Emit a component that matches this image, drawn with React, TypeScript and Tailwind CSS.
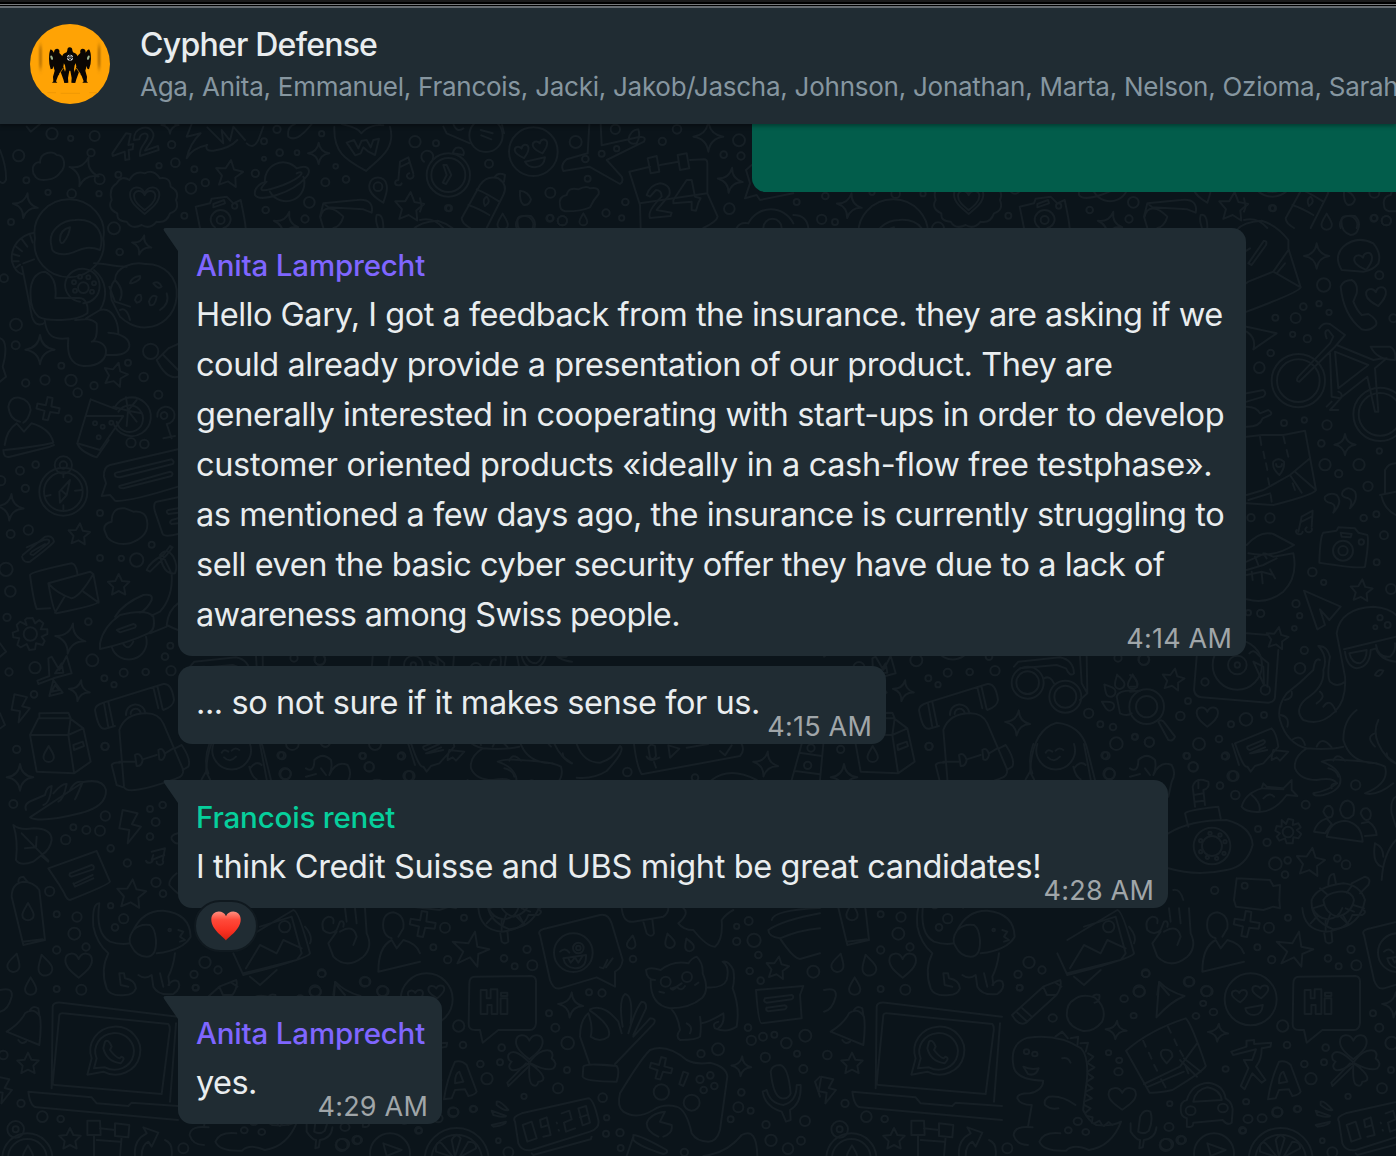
import React from "react";

type Dot = [number, number, number];

/* ---------- wallpaper primitives ---------- */

function Dots({ d }: { d: Dot[] }) {
  return (
    <>
      {d.map(([x, y, r], i) => (
        <circle key={i} cx={x} cy={y} r={r} />
      ))}
    </>
  );
}

const SHAPES = {
  spark: "M0-1Q.12-.12 1 0Q.12.12 0 1Q-.12.12-1 0Q-.12-.12 0-1Z",
  star: "M0-1L.3-.38L.95-.31L.47.16L.59.81L0 .5L-.59.81L-.47.16L-.95-.31L-.3-.38Z",
  heart: "M0 .95C-.5.55-1 .15-1-.35C-1-.95-.25-1.05 0-.45C.25-1.05 1-.95 1-.35C1 .15.5.55 0 .95Z",
  drop: "M0-1C.25-.5.65-.05.65.4A.65.6 0 0 1-.65.4C-.65-.05-.25-.5 0-1Z",
  cross: "M-.25-1L.2-1L.25-.25L1-.25L1 .2L.25.25L.2 1L-.25 1L-.25.25L-1 .2L-1-.25L-.25-.25Z",
  bolt: "M-.4-1L.5-.8L.15-.15L.7 0L-.1 1L0 .2L-.6.1Z",
};

type Mark = [keyof typeof SHAPES, number, number, number, number?];

function Marks({ m }: { m: Mark[] }) {
  return (
    <>
      {m.map(([k, x, y, s, r], i) => (
        <path key={i} d={SHAPES[k]} transform={`translate(${x} ${y}) rotate(${r ?? 0}) scale(${s})`} />
      ))}
    </>
  );
}

function Lines({ p }: { p: string[] }) {
  return (
    <>
      {p.map((d, i) => (
        <path key={i} d={d} />
      ))}
    </>
  );
}

const T = 1 / 3;

/* One repeat of the doodle wallpaper, 824px wide */
function Doodles() {
  return (
    <>
      {/* astronaut, planet, badge, drink */}
      <g transform={`translate(0 120) scale(${T})`}>
        <Dots
          d={[
            [156, 41, 17], [212, 55, 8], [284, 48, 15], [273, 98, 11], [56, 107, 17], [515, 74, 11], [526, 128, 13], [477, 137, 8],
            [583, 148, 9], [355, 164, 9], [299, 178, 15], [79, 181, 9], [144, 217, 8], [215, 221, 13], [297, 221, 8], [33, 306, 9],
            [342, 325, 18], [616, 188, 11], [573, 205, 16], [766, 160, 11], [792, 64, 9], [831, 28, 11], [839, 98, 10], [792, 116, 6],
            [891, 98, 7], [965, 41, 8], [1007, 139, 7], [976, 187, 12], [1038, 178, 10], [928, 247, 16], [797, 270, 10], [915, 297, 11],
            [553, 287, 9], [359, 396, 10], [12, 475, 12], [48, 614, 18], [47, 676, 12], [184, 737, 9], [135, 780, 14], [77, 789, 11],
            [213, 781, 17], [282, 797, 11], [233, 818, 13], [384, 728, 9], [431, 771, 13], [452, 694, 23], [475, 824, 12], [205, 896, 10],
            [393, 968, 14], [433, 972, 13], [1134, 200, 13], [1245, 65, 17],
          ]}
        />
        <Marks
          m={[
            ["spark", 76, 257, 38, 10], ["spark", 252, 155, 46, 18], ["spark", 956, 100, 32], ["spark", 425, 375, 30, 15], ["spark", 120, 689, 44],
            ["spark", 858, 312, 38, 15], ["star", 687, 163, 43, 8], ["star", 346, 765, 38, 15], ["cross", 144, 866, 34, 12],
            ["heart", 434, 240, 44], ["heart", 434, 240, 32], ["star", 1228, 262, 46, 5], ["spark", 510, 15, 26],
          ]}
        />
        <Lines
          p={[
            "M100 160C92 130 115 125 120 128C120 95 160 92 170 105C195 105 200 140 180 158C165 182 120 185 108 172Z",
            "M337 100L378 40L392 42L385 75L400 72L398 88L386 90L388 118L376 120L374 95L338 108ZM402 60C400 20 450 10 460 40C465 60 440 78 435 92L474 78L476 90L420 108C415 80 440 70 443 50C445 35 420 38 418 58Z",
            "M350 190Q365 165 388 180Q405 150 434 160Q460 145 480 175Q510 170 512 200Q540 215 528 240Q540 270 510 280Q500 310 470 305Q450 330 425 315Q395 330 380 305Q350 305 352 280Q320 265 335 240Q325 205 350 190Z",
            "M795 190A55 55 0 0 1 890 145M910 170A55 55 0 0 1 810 215M765 225C760 200 790 185 800 185C770 215 780 220 850 195C920 165 910 150 890 160M890 145C930 130 935 155 915 175C880 215 780 250 765 225",
            "M587 260L630 250L635 236L680 230L700 250L722 240Q735 300 737 324M587 260L600 324M640 252L672 240L675 250L640 262ZM696 258A8 8 0 1 0 712 258A8 8 0 1 0 696 258",
            "M632 300A30 30 0 0 1 692 300A30 30 0 0 1 670 324M645 322A30 30 0 0 1 632 300M650 300A12 12 0 1 0 674 300A12 12 0 1 0 650 300",
            "M105 355A104 100 0 1 1 310 355A104 100 0 1 1 105 355M155 380C140 330 190 300 225 300C290 295 315 340 300 390C250 370 230 400 200 402C170 405 155 395 155 380ZM180 362Q178 330 210 322Q208 345 190 368Q182 372 180 362",
            "M102 338C60 345 30 380 36 425C42 445 52 458 66 462M90 345L98 368M66 358L82 380M46 378L66 394M38 402L58 408M38 424L56 424M46 444L60 434M70 430L102 418M66 440L96 590C105 620 125 615 134 608M92 530C88 480 110 455 135 455C165 470 170 500 166 534L238 534C260 535 265 560 262 580C230 605 140 605 115 590C95 570 92 550 92 530",
            "M195 495A52 52 0 1 1 250 550M195 495A52 52 0 0 0 240 545M234 503A16 16 0 1 0 266 503A16 16 0 1 0 234 503M282 450C320 480 325 530 300 570L258 595M134 600C140 650 160 660 205 655C200 700 210 735 250 738C300 740 320 715 318 690C315 670 290 660 275 665C290 660 292 640 290 610C270 590 240 600 225 600M300 570C340 560 355 610 355 640M325 638C370 640 390 660 388 680C380 710 340 705 318 705M282 430C320 430 340 440 380 440",
            "M345 480C345 440 400 425 435 432C490 430 535 470 530 530C525 590 480 620 440 622C400 625 370 600 360 590L335 540Q325 500 345 480M328 500L345 545L390 560M345 480Q375 510 360 540M390 490Q395 470 420 468Q425 480 395 490ZM460 490Q475 480 485 500Q475 510 460 490M405 540Q410 520 422 525Q430 545 410 548ZM447 545Q455 520 470 530Q465 560 450 555ZM480 570Q510 550 500 520M360 570Q380 560 390 600",
            "M1003 20C1000 100 1040 120 1098 153C1130 120 1190 90 1170 20M1025 12C1060 20 1080 30 1084 40C1100 20 1130 12 1150 16M1040 68L1062 60L1075 85L1085 62L1100 60L1112 82L1120 60L1137 56L1125 105L1105 95L1090 82L1082 100L1066 106Z",
            "M1150 248C1120 230 1105 215 1108 195C1112 165 1155 165 1160 195C1164 215 1155 230 1150 248M1195 180L1200 125L1225 112L1240 160M1205 190A10 8 0 1 1 1195 180M1240 165A10 8 0 1 1 1228 160M1203 140L1228 128",
            "M970 250L1070 240C1110 235 1120 255 1115 278L1090 268L985 262ZM962 290C970 255 1000 260 1030 290C1025 310 1010 324 1000 324M970 250L960 290L970 324M1130 285Q1150 280 1150 324M1130 285Q1125 300 1134 324",
            "M560 50L575 12M560 50L602 40Q570 70 560 115Q575 85 622 75M622 22L670 70L665 30L690 62L700 20L735 60M620 75Q615 95 640 92Q690 85 712 60M740 70Q760 90 775 60L790 20M865 50Q860 20 885 12M865 50Q890 70 935 12",
            "M0 90Q20 140 18 180Q10 195 0 185M0 655C20 660 20 700 8 740L18 770L0 785M80 20L92 35L120 12",
            "M25 860Q30 830 58 833Q90 840 92 870Q85 900 70 908M25 860Q30 900 60 905M14 975Q20 930 50 910L72 935L94 910Q150 925 160 968Q110 980 14 990M272 838L350 868M272 838L232 970L300 990L370 888L258 888M345 860A58 58 0 1 1 340 910M355 875A40 40 0 1 1 350 905M340 860L384 872L410 840M384 872L425 880M384 872L410 905M384 872L380 918M384 872L378 832",
            "M472 890A26 26 0 1 1 500 912L515 955M490 955L525 948M482 888A10 10 0 1 0 502 885A10 10 0 1 0 482 888M505 685L534 672M470 720Q500 780 534 770M505 685L470 720M490 705L534 750",
          ]}
        />
        <Dots d={[[285, 910, 6], [308, 920, 6], [334, 908, 6], [296, 952, 6], [222, 487, 6], [240, 470, 6], [265, 472, 6], [282, 490, 6], [225, 512, 6], [276, 515, 6]]} />
      </g>

      {/* plane, calendar, bottle */}
      <g transform={`translate(420 120) scale(${T})`}>
        <Dots
          d={[
            [48, 70, 9], [207, 131, 12], [467, 66, 18], [586, 28, 14], [545, 101, 9], [590, 86, 8], [496, 117, 10], [503, 176, 9], [727, 64, 11],
            [771, 28, 13], [957, 61, 18], [911, 104, 10], [963, 108, 11], [391, 218, 15], [616, 246, 10], [558, 279, 11], [605, 294, 8],
            [427, 302, 14], [389, 295, 10], [84, 264, 9], [928, 266, 16], [1130, 246, 9], [1216, 228, 10], [1205, 298, 14], [340, 95, 73],
            [85, 165, 65], [85, 165, 51], [198, 46, 50],
          ]}
        />
        <Marks
          m={[
            ["spark", 865, 50, 45], ["spark", 931, 181, 38, 8], ["drop", 490, 298, 18], ["heart", 307, 95, 21, -15], ["heart", 362, 80, 22, -15], ["drop", 248, 305, 24],
          ]}
        />
        <Lines
          p={[
            "M315 125L375 112Q372 140 345 142Q325 142 315 125M300 212Q325 215 333 238Q328 258 310 254Q298 245 300 212",
            "M12 125A18 18 0 1 1 38 118M98 100Q105 75 125 85Q135 95 130 105L98 100M70 135L80 135L94 165L78 192L68 188L80 165Z",
            "M70 20L80 40L150 70M100 12Q110 40 130 25M182 30L218 40M184 46L214 58M246 15L252 40",
            "M508 12L503 100L440 118Q420 135 430 153L508 140L600 192Q612 185 605 170L560 120L672 65Q680 50 660 50L545 76L542 12M625 60Q630 30 655 28Q662 50 650 70Q630 75 625 60",
            "M180 195Q200 165 235 175Q265 195 250 225L200 324M180 195L125 295Q125 310 150 324M170 208Q200 220 238 245M145 255Q175 265 208 285M195 258Q185 240 200 230Q215 245 195 258M225 170Q235 155 255 165L252 185",
            "M420 255Q415 230 440 225Q445 200 475 208Q500 195 510 205Q540 200 536 222Q520 240 510 262Q480 275 435 274Q420 270 420 255",
            "M628 155L690 140M720 135L775 125M810 120L852 118Q862 118 862 130L862 220L893 290Q890 305 850 324M628 155L660 255L662 324M660 250L862 220M683 115L710 108L718 155L692 160ZM773 105L800 100L808 145L780 150Z",
            "M680 225Q690 195 720 190Q755 195 748 225L710 270L755 278L752 288L690 294Q680 275 725 230Q725 210 708 210L690 230ZM760 240L800 180L815 180L825 230L842 235L835 248L828 272L815 270L815 245L760 250Z",
            "M290 324A26 26 0 1 1 338 324M0 300Q40 290 70 324M0 235L5 260L0 275",
            "M995 135L978 150L990 190L975 235L1010 225L1020 240L1120 220M985 310A75 75 0 0 1 1120 310M1120 285Q1160 285 1165 324M950 324Q960 305 985 310M1030 324A25 25 0 0 1 1085 324",
          ]}
        />
      </g>

      {/* compass, mail, gear, moped, milk */}
      <g transform={`translate(0 440) scale(${T})`}>
        <Dots
          d={[
            [60, 92, 12], [107, 74, 10], [76, 145, 11], [300, 219, 9], [32, 282, 12], [85, 270, 14], [455, 314, 9], [300, 354, 9], [364, 355, 8],
            [410, 360, 20], [18, 388, 20], [31, 454, 16], [21, 532, 11], [265, 545, 10], [277, 661, 18], [105, 683, 17], [27, 696, 11],
            [371, 698, 12], [437, 696, 10], [313, 715, 9], [342, 734, 8], [513, 692, 14], [495, 650, 10], [511, 617, 9], [102, 763, 10],
            [50, 928, 11], [315, 919, 11], [190, 155, 72], [190, 155, 58], [190, 75, 26], [190, 75, 11], [91, 582, 20], [2, 122, 14],
          ]}
        />
        <Marks
          m={[
            ["spark", 31, 202, 40, 5], ["star", 237, 284, 34, 5], ["star", 356, 436, 34], ["spark", 211, 596, 46, 10], ["spark", 238, 752, 32, 10],
            ["spark", 60, 1012, 40], ["drop", 146, 942, 24], ["bolt", 60, 805, 42],
          ]}
        />
        <Lines
          p={[
            "M210 120L200 165L180 188L178 155ZM183 150L200 165M190 100L190 112M245 150L225 152M152 165L138 168M190 210L190 196",
            "M10 30Q10 55 30 50L150 20L162 15M232 10Q240 35 290 52L326 0",
            "M534 28L330 75Q310 80 312 110L318 130L305 168L330 165L345 182Q380 188 534 140M345 105Q340 98 360 95L515 58Q525 65 518 72L360 112Q345 112 345 105M358 138L510 95Q522 98 515 108L370 145Q355 145 358 138",
            "M313 270Q310 250 335 245Q335 200 375 205Q390 210 400 215Q440 210 442 250Q445 290 390 310Q345 318 322 292ZM534 172L470 185Q458 190 465 215L488 282Q495 292 534 282M534 205L505 210Q495 215 505 222L534 218M534 235L515 240Q505 248 515 252L534 250",
            "M68 345L135 290Q160 285 162 305Q150 320 90 365Q70 370 66 350M80 322L130 300Q155 295 145 310L100 345Q85 345 95 335L135 312",
            "M150 505L110 507Q100 480 90 405Q95 395 215 370Q228 372 232 400M145 430L270 395L280 402L296 485Q295 495 170 520Q160 515 145 430M145 430Q170 460 215 475Q240 470 280 402M165 518L195 468M296 488L250 455",
            "M75 540L80 555L60 545L50 555L55 572L38 578L40 592L58 595L52 615L62 622L80 612L88 630L105 628L108 610L128 615L134 603L125 590L142 582L142 568L122 568L130 550L118 540L105 550L98 534L80 535Z",
            "M440 390Q450 365 490 345L510 318L518 322L500 345L450 395ZM480 345Q500 320 520 350Q535 380 525 400Q490 405 480 345M490 350L512 395M515 400Q520 470 480 515L455 527M345 530Q370 490 430 465Q460 460 455 480Q440 510 420 518M300 610Q310 560 360 525Q440 505 460 530Q468 570 445 580Q380 610 300 627ZM350 570L400 552Q412 555 405 563L360 577ZM335 620A52 52 0 0 0 438 590M370 612Q385 635 400 605M534 490Q505 510 500 555Q520 565 534 570M450 580L500 560",
            "M145 655L155 650L178 690L200 648L215 700L160 715L115 732L112 722L148 708ZM165 700L185 670L190 698ZM148 768L160 720L188 758ZM155 755L165 735L178 750Z",
            "M90 885L115 835L210 835L250 865L272 965L222 1000L110 995ZM118 835L118 820L205 818L212 835M90 885L205 885L250 865M205 885L222 998M205 885L212 835M220 915L248 905L252 918L222 930Z",
            "M285 810Q285 795 310 788L490 732Q515 728 522 780Q520 800 490 810M285 810Q295 870 315 866L345 858M312 790L325 862M325 786L340 858M460 742L475 805M472 738L488 808M378 825A28 28 0 1 1 436 820M392 822A15 15 0 1 1 422 820",
            "M358 870Q375 820 440 820Q475 820 490 850L550 990Q550 1010 530 1015Q380 1070 372 1040ZM358 965L405 965M428 958L470 945M495 940L520 925M405 945Q420 935 428 960Q425 980 410 978ZM475 930Q490 920 495 945Q490 965 478 958ZM335 975Q340 965 360 968M335 975L350 1035L370 1042M525 925L545 915Q575 960 565 980L548 990M0 610L18 635L0 650M0 820L15 855L0 865",
          ]}
        />
      </g>

      {/* bread, leaf, dog, laptop */}
      <g transform={`translate(0 740) scale(${T})`}>
        <Dots
          d={[
            [40, 192, 12], [316, 228, 14], [220, 262, 9], [259, 270, 12], [300, 272, 15], [197, 299, 14], [332, 325, 10], [382, 369, 11], [467, 246, 12],
            [450, 290, 10], [488, 195, 10], [450, 207, 9], [149, 454, 14], [170, 523, 9], [231, 531, 14], [223, 581, 18], [258, 621, 11],
            [170, 630, 11], [170, 747, 9], [244, 749, 15], [468, 427, 14], [489, 461, 10], [332, 497, 8], [371, 536, 14], [345, 562, 10],
            [615, 667, 17], [582, 703, 11], [654, 690, 11], [587, 743, 9], [10, 945, 13], [63, 1090, 11], [127, 1130, 16], [182, 1137, 10],
            [550, 1225, 15], [842, 46, 10], [855, 101, 17], [1107, 80, 14], [1087, 47, 9], [1202, 49, 9], [1225, 108, 15], [315, 19, 11],
            [965, 700, 12], [1094, 725, 15], [945, 753, 17], [1147, 753, 16], [1070, 1200, 13], [1025, 1215, 18],
            [509, 570, 4], [47, 1168, 25], [47, 1168, 9], [1170, 1240, 60], [82, 1255, 75], [82, 1255, 58], [854, 560, 17],
          ]}
        />
        <Marks
          m={[
            ["bolt", 388, 260, 50], ["star", 394, 464, 46, 5], ["drop", 84, 515, 26], ["drop", 43, 668, 28, 15], ["drop", 133, 675, 32, -15],
            ["drop", 92, 738, 26], ["heart", 236, 675, 40], ["star", 84, 972, 34], ["star", 210, 1198, 34], ["bolt", 8, 1050, 40], ["drop", 84, 1240, 24],
          ]}
        />
        <Lines
          p={[
            "M78 210Q70 190 100 180L135 165Q140 140 155 138Q150 190 130 195M160 160Q185 130 200 132Q190 180 175 185M210 150Q225 120 248 126Q230 170 225 178M250 126Q310 115 318 150Q320 200 240 220Q120 250 90 232Z",
            "M40 255Q60 272 100 265Q155 265 155 300Q150 330 125 345L100 365Q60 380 48 360Q55 300 40 255M65 280L145 362M110 290L108 320M75 325L108 322M125 348L145 365",
            "M145 385L290 333L330 425Q325 435 210 480Q200 480 192 458L175 430ZM210 400L275 375Q285 378 280 388L215 410Q205 408 210 400M225 430L278 405M220 430L225 440L280 415M455 335L495 325L488 362M460 345L455 360L493 345M438 362A10 8 0 1 0 458 358M470 365A10 8 0 1 0 488 362",
            "M35 470Q35 430 70 425Q100 425 118 450L135 600L70 615ZM55 425Q55 410 70 410L82 425M68 605L128 598M530 400Q505 420 508 435Q520 450 534 460M534 280Q510 285 515 298Q525 312 534 310",
            "M298 490Q275 490 280 560Q290 610 325 640Q300 690 320 745Q330 770 375 765Q400 765 408 745Q405 720 375 715L372 700L358 700L362 735L385 740M298 490Q285 580 330 605Q360 615 390 610M450 555Q420 550 400 570Q380 600 395 620Q410 650 440 650Q470 650 468 600Q465 565 450 555M400 570Q430 510 490 512Q570 520 572 590Q550 630 470 640M415 705Q435 720 455 705L460 740Q475 768 520 762Q545 745 535 725Q520 715 505 735M480 700L490 740M525 640Q520 680 505 710L508 735M535 570L550 575L540 590L555 600L540 605",
            "M155 1045L158 800Q160 785 185 788L534 830M158 1030L178 825Q180 818 190 820L505 852Q512 860 508 880L485 1062L165 1035Q158 1035 158 1030M85 1055Q90 1100 110 1102L534 1140M85 1055L275 1072L290 1090L385 1098L395 1088L534 1098M510 1085L528 850",
            "M262 1004L275 955A75 72 0 1 1 310 995ZM282 985L290 955A58 55 0 1 1 315 982ZM315 905Q325 895 335 920L330 930Q345 950 358 955L365 950Q378 955 362 970Q320 965 310 925Z",
            "M20 875Q60 850 75 820Q100 800 120 830Q125 860 118 915L20 875M90 810Q100 795 115 805L118 825M55 900Q65 915 78 905M0 750Q40 740 35 770Q25 810 0 815",
            "M262 1142L300 1142L302 1185L262 1185ZM345 1150L388 1155L385 1192L345 1188ZM300 1165L345 1170M282 1185L282 1248M365 1190L360 1248M290 1200L360 1205M405 1248Q400 1200 440 1180L430 1162L475 1178L455 1220L445 1205Q425 1215 425 1248M495 1200Q520 1210 515 1248",
            "M1150 1210L1205 1230L1160 1248Z",
            "M730 600L880 510Q895 510 930 640Q925 655 730 705L700 640M730 700L890 660L905 640L875 530L780 560M738 685L780 615L830 640L850 600L905 625M750 710L780 735L830 690M915 560Q940 590 930 610",
            "M970 570Q960 540 985 530Q1005 530 1000 550M970 570Q990 590 1010 570L1020 545Q1035 540 1030 560M1010 575L985 610L1000 650Q1040 690 1090 650Q1120 620 1100 580L1095 505M1040 545L1035 505M1070 550L1065 505M1020 575Q1060 550 1070 590L1060 615M1150 565Q1145 520 1180 517Q1215 525 1210 565L1195 590M1150 565Q1155 590 1175 595M1135 695Q1135 620 1175 600L1190 625L1210 600Q1250 610 1260 640M1135 695L1260 665M1000 765L1005 730L1035 765",
            "M628 12Q610 60 625 100M640 12A58 58 0 1 0 750 12M665 38Q672 25 685 35M695 32Q705 20 718 30M672 52Q690 70 708 50M780 12L800 118M750 85Q770 60 785 75M605 118L618 95L630 118M748 80Q755 110 770 118M1225 12L1245 75",
          ]}
        />
      </g>

      {/* speech, cat, controller, clover, clock */}
      <g transform={`translate(400 880) scale(${T})`}>
        <Dots
          d={[
            [135, 143, 15], [192, 113, 9], [100, 202, 9], [143, 239, 11], [312, 235, 10], [344, 259, 9], [381, 208, 11], [397, 256, 15], [567, 337, 9],
            [606, 339, 11], [699, 237, 10], [447, 400, 9], [466, 443, 12], [176, 438, 17], [189, 495, 10], [305, 503, 10],
            [300, 547, 9], [241, 552, 10], [261, 596, 17], [159, 697, 15], [219, 687, 10], [55, 751, 10], [372, 649, 8], [474, 625, 15],
            [503, 489, 19], [501, 570, 9], [608, 653, 13], [620, 713, 8], [618, 761, 9], [660, 758, 11], [295, 782, 7], [662, 804, 9],
            [325, 817, 15], [1046, 123, 12], [1010, 139, 8], [1010, 184, 11], [1062, 181, 20], [1075, 225, 10], [1049, 273, 10], [1082, 302, 10],
            [1240, 275, 18], [1044, 443, 10], [1054, 481, 14], [1089, 470, 12], [1123, 464, 9], [1159, 489, 16], [1216, 467, 18], [1191, 521, 9],
            [1096, 532, 14], [1210, 567, 12], [954, 508, 18], [903, 521, 11], [1024, 637, 10], [1015, 682, 15], [1052, 692, 9], [992, 718, 9],
            [1098, 734, 11], [1215, 723, 15], [1113, 781, 17], [1164, 806, 16], [1203, 782, 12], [853, 817, 11], [784, 636, 23], [875, 668, 24],
            [900, 598, 11], [931, 586, 10], [911, 630, 10], [943, 618, 10], [80, 358, 78], [520, 218, 58], [535, 204, 16], [535, 204, 7],
            [170, 840, 96], [170, 840, 76], [797, 305, 15], [861, 291, 15],
          ]}
        />
        <Marks
          m={[
            ["cross", 68, 132, 38, 10], ["spark", 512, 375, 38, 5], ["star", 1132, 265, 36, 8], ["spark", 1024, 559, 30, 5], ["drop", 695, 186, 20, 10],
            ["drop", 808, 182, 22, -15], ["drop", 866, 194, 20, -20], ["cross", 783, 565, 33, 15], ["heart", 388, 500, 40],
          ]}
        />
        <Lines
          p={[
            "M225 155L232 200L268 208L235 222L232 260L210 232L172 250L190 215L158 185L205 190Z",
            "M235 84Q240 150 305 155Q370 150 385 105L415 105Q430 95 418 90M265 84Q280 115 310 118Q345 115 355 84M300 155L305 185Q315 195 325 185L322 152M260 130L280 108M305 118L305 150M345 105L370 130M365 85L390 95",
            "M420 165Q410 150 440 145L600 105Q625 100 635 130L668 240Q665 265 645 275L645 320L590 292L480 325Q460 330 450 300ZM480 215Q495 200 508 218M490 235L558 225Q560 265 525 265Q495 262 490 235M505 235L512 248L525 232L535 248L548 228M600 262L610 265L622 240M618 262L638 235",
            "M208 310Q208 290 225 290L395 288Q410 290 408 310V430Q405 450 390 450H295L248 488L240 450H225Q205 450 206 430ZM242 330H260V355H272V328H292V402H275V375H262V402H242ZM302 355H322V402H302ZM303 338H322V348H303Z",
            "M386 545Q340 500 325 525Q322 540 335 545Q320 560 335 570Q350 575 386 550M390 545Q420 505 450 512Q462 520 455 535Q475 550 460 565Q440 575 392 550M388 555Q385 610 398 615Q412 622 415 605Q432 605 430 592Q425 575 392 552",
            "M385 560L325 618L322 608L378 550M132 658Q140 600 165 545Q185 540 200 555L230 635Q225 645 205 648L195 628L165 630L155 655ZM165 610Q165 580 178 575L190 605Z",
            "M565 400Q540 420 540 470L568 550M565 400Q580 440 572 470Q600 490 625 470Q640 440 570 392M570 388Q610 370 655 425L665 460M668 440Q655 360 675 342Q700 345 692 430M685 460Q705 390 725 365Q740 365 738 385L700 465M700 470L750 415Q770 415 762 430L645 552M550 560Q555 548 650 558Q660 570 650 605Q555 605 548 590Z",
            "M765 300Q740 300 738 270Q750 260 782 270Q820 240 865 250Q875 235 890 230Q910 250 908 280Q930 330 905 355Q870 385 810 385Q750 375 752 300M815 325L830 320L845 310M830 320Q820 335 812 325M832 322Q845 335 855 318M778 335L792 338M885 315L895 308M920 322Q970 325 980 300Q990 260 968 245Q985 240 1000 270Q1005 300 998 325Q1020 380 1010 440Q980 460 945 445Q935 430 955 425M815 388Q835 410 840 450Q825 470 840 480Q890 480 900 470Q905 440 900 410M860 430Q880 440 870 460M905 430Q930 425 970 400Q975 430 955 445",
            "M660 640Q720 540 750 510Q800 490 860 540Q890 555 930 548Q980 560 982 590L960 750Q950 785 925 785Q890 785 875 760Q860 690 830 680Q790 670 760 690Q710 720 670 695Q650 680 660 640M850 575L865 580L850 618L838 612Z",
            "M740 730Q750 700 795 695L780 725L815 735Q820 760 790 770M740 730Q740 755 775 770M700 765Q720 765 800 810Q805 820 790 822Q720 800 700 780ZM700 770L680 828M910 828Q980 820 1025 765Q1070 740 1072 828",
            "M345 725Q335 710 365 700L565 655Q580 655 595 720Q600 745 570 755L395 810Q365 815 355 790ZM395 820L400 825L572 778L575 770M368 735L395 725L410 775L382 785ZM445 735L424 742L420 720L440 712L452 765L430 770M485 700L508 692L515 718L492 728L498 755L525 745M535 685L558 678L570 728L548 736ZM540 712L564 704M470 728L471 730M476 750L477 752",
            "M290 665Q300 660 325 690Q315 695 290 675ZM275 692L318 708Q315 715 280 705ZM275 735L318 725Q318 735 280 740ZM165 830L155 780Q168 755 182 775ZM160 832L125 790Q105 780 108 815ZM178 832L205 785Q230 785 228 805Z",
            "M665 84Q670 130 700 125L790 110Q805 100 805 84M730 125L740 160Q755 175 762 160L757 118M850 84Q870 100 835 130Q850 150 880 150Q920 200 945 200Q970 180 965 120Q980 100 1000 90M1260 84Q1120 90 1115 120M1260 100Q1150 120 1105 150Q1105 170 1140 175Q1180 235 1200 237L1260 220M1140 175Q1200 150 1260 145",
            "M1068 330L1210 318L1200 345L1205 415L1085 430Q1075 430 1068 330M1095 355L1175 345Q1185 350 1175 358L1100 368Q1088 365 1095 355M1100 383L1155 376Q1165 380 1155 388L1105 394Q1095 390 1100 383",
            "M1112 575Q1115 555 1140 555Q1165 560 1172 640Q1165 658 1145 655Q1120 650 1112 575M1088 635Q1095 680 1145 695L1158 725L1172 720L1170 690Q1205 670 1202 615L1190 615Q1190 665 1150 675Q1110 670 1100 630ZM1260 590L1245 605L1260 650",
          ]}
        />
      </g>

      {/* dinosaur, folded map, car, pencil, letters */}
      <g transform={`translate(-24 880) scale(.38 ${T})`}>
        <Dots
          d={[
            [578, 323, 8], [665, 414, 11], [853, 356, 10], [893, 335, 15], [910, 281, 10], [878, 407, 8], [1025, 305, 13], [1071, 334, 15], [1061, 370, 8],
            [1088, 396, 10], [1042, 408, 9], [812, 518, 7], [840, 541, 8], [838, 575, 11], [1120, 567, 8], [973, 671, 7], [1174, 665, 8], [971, 741, 12],
            [965, 793, 17], [1005, 780, 11], [1166, 752, 8], [1179, 717, 12], [1216, 715, 12], [1257, 696, 13], [1310, 687, 9],
            [596, 515, 7], [618, 522, 7], [706, 751, 9], [752, 756, 9], [731, 724, 11],
          ]}
        />
        <Marks
          m={[
            ["spark", 832, 450, 28, 5], ["spark", 1100, 458, 27, 5], ["heart", 848, 655, 36], ["heart", 1157, 348, 20, -5], ["heart", 1212, 335, 21, -5],
          ]}
        />
        <Lines
          p={[
            "M558 405L640 320L685 300Q690 320 675 345L595 428Q575 440 558 405M640 320L650 345L675 345M572 398L598 425M585 385L610 410M672 308L688 320",
            "M720 360Q740 340 775 352Q810 385 795 425Q775 455 745 453Q705 440 702 405Q702 370 720 360M770 350Q775 340 788 345Q790 365 775 368",
            "M945 305Q970 335 1012 348Q975 365 938 412Z",
            "M562 560Q550 490 600 473Q680 460 740 505Q760 530 755 600L745 690Q760 725 780 735Q820 740 845 725Q820 800 760 810Q720 790 700 812Q640 815 630 785Q640 755 685 760M562 560Q570 600 640 602Q640 630 605 640Q570 640 572 655Q580 675 610 675L600 740M612 742Q565 735 562 765Q570 795 600 795M725 675Q690 645 655 650Q640 660 645 675Q660 690 680 685M588 560Q605 570 628 565Q620 590 600 582ZM690 535Q705 530 712 548",
            "M672 470L690 455L705 475M712 475L732 470L730 495M738 490L758 488L752 515M758 520L772 530L758 545M758 550L775 562L757 575M757 580L772 592L755 605M755 612L770 625L752 635M752 642L768 655L748 665M748 675L765 685L750 700M755 708L770 712L768 728M775 730L788 722L795 735M800 738L812 726L822 735",
            "M858 512Q920 450 1015 415Q1030 430 1068 558Q1060 575 980 630Q940 640 920 638ZM905 612L1000 560L1045 490M912 622L1010 575M1000 540L1045 590M1010 535L1055 575M965 550Q940 520 955 510Q980 505 980 530Z",
            "M903 482L910 500M918 518L925 536M932 555L940 572M950 598L962 622M968 440L976 458M985 478L992 496M1000 512L1008 528M1015 560L1022 580",
            "M1002 690Q1000 665 1018 660Q1030 612 1075 608Q1115 615 1120 655Q1142 670 1138 700L1136 728Q1125 738 1112 720L1035 728Q1035 745 1018 740L1018 715Q1002 710 1002 690M1035 665Q1040 630 1072 622Q1105 628 1110 660ZM1015 692A13 13 0 1 0 1041 692A13 13 0 1 0 1015 692M1100 684A13 13 0 1 0 1126 684A13 13 0 1 0 1100 684",
            "M1135 515L1175 500L1175 482L1195 480L1195 492L1240 488L1238 500L1215 505Q1215 540 1200 560L1225 600L1215 608L1190 580L1170 628L1160 618L1180 565L1168 540L1190 540L1200 508L1140 525Z",
            "M895 710Q905 685 922 695Q930 720 918 752Q905 765 890 755ZM870 730L870 755Q885 780 895 780L893 805L902 802L905 780Q935 775 938 742M1172 385L1218 375Q1215 405 1195 405Q1175 405 1172 385",
          ]}
        />
      </g>

      {/* envelope, bicycle, map, quotes */}
      <g transform={`translate(306 180) scale(${T})`}>
        <Dots
          d={[
            [429, 85, 9], [733, 114, 10], [769, 122, 14], [748, 286, 12], [581, 315, 20], [520, 380, 10], [567, 371, 8], [597, 397, 8], [436, 413, 9],
            [497, 414, 15], [488, 463, 8], [532, 476, 11], [422, 519, 10], [388, 563, 16], [462, 729, 9], [523, 720, 8], [591, 735, 14],
            [574, 790, 10], [585, 854, 17], [687, 854, 17], [626, 881, 11], [748, 813, 8], [714, 919, 14], [420, 1014, 14], [363, 1013, 11],
            [701, 1014, 10], [739, 1003, 9], [505, 602, 80], [505, 602, 64], [750, 703, 80], [750, 703, 64], [790, 415, 12],
          ]}
        />
        <Marks
          m={[["spark", 560, 228, 38], ["spark", 645, 794, 32], ["heart", 740, 350, 30, -10], ["heart", 702, 245, 27, -15]]}
        />
        <Lines
          p={[
            "M320 150Q340 125 395 122Q440 135 475 180L475 205L512 322Q510 335 350 395L300 395M475 210L430 275L355 305L320 330M430 275L512 322M465 250L440 280M355 250L402 182Q412 182 408 195L365 255ZM345 215L360 205",
            "M635 270Q610 230 640 200Q680 165 730 190Q755 220 745 250Q730 270 700 275ZM632 320Q640 300 665 300Q685 310 680 340L670 365Q680 390 695 405L715 402Q745 420 738 435Q720 455 695 448Q640 405 632 320M635 115Q640 105 675 108Q692 125 685 145Q680 165 662 165Q630 155 635 115",
            "M350 440L440 460L370 508Q380 475 350 455M568 445Q580 425 600 432L645 465L615 500L508 605Q495 605 505 590L600 490L610 470L595 450Q580 450 590 475M620 495L730 540Q750 535 770 535L735 565L745 695L735 695L712 590L630 655L605 650L600 520M615 515L715 555L625 625ZM722 500L780 500Q800 510 795 540Q740 540 722 500M625 635Q640 640 632 655L600 690L625 690M590 680L605 665",
            "M350 770L395 765L460 765L525 752L558 930Q550 945 430 975L350 970M350 945L400 930L480 885L540 835M355 960L420 940M480 885L515 938M495 875L558 930M448 885Q425 865 430 845Q445 830 462 845Q465 865 448 885M438 852A9 9 0 1 0 456 852",
            "M390 770L394 795M400 815L404 835M408 850L412 870M414 895L418 915M422 945L425 965M460 768L465 790M470 810L475 830M488 910L495 930",
            "M610 998Q620 975 605 970Q580 965 585 950Q600 935 620 945Q640 965 610 998M660 985Q670 960 655 955Q630 950 638 935Q655 915 675 935Q685 960 660 985M505 1055L515 1010L548 992L545 1040M515 1025L545 1010M500 1050A10 8 0 1 0 518 1055M530 1042A10 8 0 1 0 545 1045M765 940L765 870Q775 850 798 850M750 945L798 935M755 950Q765 990 798 1005",
            "M350 640L400 630Q412 640 400 650L350 665M350 680Q380 680 390 700L415 690Q430 700 420 705L398 715Q390 740 350 740",
          ]}
        />
      </g>

      {/* camera, octopus, turntable, fish, people */}
      <g transform={`translate(306 520) scale(${T})`}>
        <Dots
          d={[
            [762, 46, 12], [740, 127, 9], [547, 156, 13], [581, 187, 8], [498, 251, 11], [509, 287, 8], [493, 325, 7], [392, 280, 11], [355, 278, 8],
            [523, 391, 11], [510, 445, 16], [783, 207, 15], [639, 92, 30], [639, 92, 14], [694, 66, 8], [41, 418, 16], [225, 486, 11], [174, 543, 9],
            [151, 588, 13], [303, 613, 9], [348, 598, 19], [402, 585, 9], [14, 651, 8], [58, 667, 14], [207, 672, 18], [267, 657, 10], [171, 708, 9],
            [190, 741, 14], [287, 708, 11], [311, 768, 15], [270, 797, 10], [316, 825, 13], [527, 854, 12], [677, 795, 14], [384, 927, 9],
            [411, 967, 11], [436, 1031, 19], [473, 1021, 10], [465, 1064, 10], [622, 1015, 10], [648, 1034, 13], [254, 1111, 11], [344, 1097, 9],
            [322, 435, 74], [322, 435, 28], [322, 435, 8], [50, 560, 52], [50, 560, 32], [246, 978, 55], [246, 978, 30], [474, 936, 16],
            [750, 293, 8], [773, 315, 9], [736, 322, 6], [406, 510, 14],
          ]}
        />
        <Marks
          m={[["star", 694, 213, 35, 5], ["star", 129, 480, 35, 10], ["star", 441, 356, 35, 10], ["heart", 232, 590, 32], ["star", 541, 1028, 45, 8]]}
        />
        <Lines
          p={[
            "M580 38L620 32L625 22L675 25L685 38L712 45Q718 60 705 140Q695 148 568 128Q570 50 580 38M632 38L665 42L662 52L635 50Z",
            "M522 212L632 260L598 300L570 268L585 315L562 328ZM350 75Q390 30 430 42L492 75Q430 115 355 100M350 125L405 100L430 110L490 100Q505 170 460 215Q410 255 350 238M350 150L400 135L440 115M350 165L395 155L430 165M375 110L385 135M400 100L410 115M365 155L368 180M395 160L398 190M420 148L435 175",
            "M200 410L192 510Q195 530 215 532L415 548Q435 545 435 530L445 390M350 340L415 345M358 400Q370 385 385 405L415 430L412 500M402 495L400 440L370 425Z",
            "M85 605Q95 595 105 610L135 650Q130 665 115 660ZM0 465Q25 475 22 500L0 500M0 515L30 512",
            "M645 470L620 340Q630 265 730 260Q780 265 798 285M642 388L798 350M645 395Q650 440 680 445Q720 440 722 390L738 385Q750 420 798 425M658 400Q665 430 690 430Q710 420 710 390ZM738 375Q745 415 780 410Q798 395 795 370M735 465Q745 445 760 452Q750 475 735 465",
            "M645 470Q650 540 615 575Q570 620 520 600Q490 570 530 535Q585 500 580 450Q595 410 565 378Q590 375 600 410Q590 470 600 485Q620 505 645 485M570 420Q555 410 550 450Q510 490 470 520Q440 560 450 600Q470 670 530 685Q600 690 640 680M530 685Q490 710 495 745Q510 780 560 780Q610 770 620 790Q600 810 550 820Q550 830 580 825Q640 810 630 770Q620 740 575 725Q600 715 640 720Q740 725 765 740Q780 790 705 820Q740 830 790 790M680 570Q640 600 640 660Q660 730 740 730M745 600Q720 650 770 710L798 730",
            "M465 540Q490 535 485 515M452 585Q480 590 472 620M485 660Q515 640 525 675M560 680Q575 645 605 682M570 515Q590 530 560 550M580 560Q600 530 618 575M610 722Q620 695 645 722M595 745Q620 750 625 770M735 640Q705 650 735 680M770 700Q770 720 798 730M605 805Q600 790 622 790",
            "M315 670L425 625Q440 640 445 680L400 730L375 738L362 755L352 740Q340 745 315 670M352 680L400 660Q410 665 400 672L360 690Q350 688 352 680M360 700L405 682M425 710L430 690L475 695L450 722L440 712L425 720ZM365 700L412 690",
            "M335 860Q345 820 395 805L400 790L410 800L460 805L485 780L485 810L502 828L470 825Q430 880 380 876Q345 875 335 860M365 825Q395 850 388 875M400 835Q420 815 432 830M398 805L460 808",
            "M0 745Q25 760 25 720Q50 695 75 720Q80 745 70 765Q90 720 125 735Q140 760 125 785M0 770L30 762M60 765L45 745M125 785L115 830M195 860L188 800Q195 775 220 780L235 785Q240 805 220 810L225 855M192 825L220 820M195 845L222 842M205 780L205 805M175 920L165 880Q170 870 265 860L272 895M115 940Q180 900 290 900Q365 920 368 975Q350 1040 290 1050Q200 1070 115 1045",
            "M455 900L468 912L475 896L490 900L488 915L505 910L512 922L500 930L514 942L505 955L490 952L488 970L470 970L465 955L448 962L440 950L450 940L436 932L440 918L455 920Z",
            "M590 950Q600 905 645 902Q695 910 698 965ZM630 870Q635 840 655 842Q678 850 670 885Q650 905 635 885ZM580 875Q585 855 600 858Q615 870 605 890Q590 900 580 875M552 935Q560 905 590 895L605 912L585 940ZM692 880Q695 862 712 865Q728 875 720 895Q705 910 692 880M695 910L715 905Q738 920 740 945L705 948",
            "M320 1075L420 1080L430 1098L450 1095L448 1140M320 1075L312 1140M595 1095Q595 1060 612 1062L618 1092M545 1140Q560 1100 640 1090Q690 1095 705 1140M665 1090L705 1070Q725 1075 715 1095L690 1120M130 1110Q150 1105 160 1140M798 830Q780 840 785 880L798 920M755 1080Q760 1000 798 960M735 970Q725 1030 755 1040M735 970Q760 980 760 1010",
            "M312 1140L318 1160L400 1170L430 1160L450 1165L448 1140M545 1140Q540 1200 610 1228Q690 1220 705 1140M580 1140Q585 1180 622 1190Q665 1180 672 1140Q665 1110 625 1115Q590 1120 580 1140M580 1155L548 1165M600 1185L590 1215M640 1188L655 1215M670 1155L702 1165M590 1122L570 1105M650 1118L665 1098",
          ]}
        />
        <Dots d={[[240, 940, 5], [270, 945, 5], [285, 965, 5], [282, 1000, 5], [260, 1015, 5], [232, 1012, 5], [212, 995, 5], [212, 962, 5]]} />
      </g>

      {/* glasses, paw, penguin, magnifier */}
      <g transform={`translate(36 640) scale(${T})`}>
        <Dots
          d={[
            [686, 220, 14], [721, 253, 9], [759, 261, 10], [825, 290, 9], [868, 306, 14], [769, 311, 19], [738, 347, 11], [749, 402, 16], [852, 59, 16],
            [774, 54, 11], [503, 128, 48], [503, 128, 34], [616, 170, 48], [616, 170, 33],
          ]}
        />
        <Marks m={[["spark", 473, 249, 38, 5], ["drop", 747, 150, 22, -40], ["drop", 777, 125, 22, -15], ["drop", 818, 125, 22, 0], ["drop", 743, 195, 20, -60]]} />
        <Lines
          p={[
            "M462 80L475 65L600 52Q640 60 642 100Q630 112 618 85L590 75L480 85M552 115Q570 105 582 130M660 48L665 130L682 160L660 180M680 48L682 160M770 170Q775 150 825 152M770 170L780 220Q800 230 815 220",
            "M510 400Q515 270 590 248Q660 255 680 320L705 420",
          ]}
        />
      </g>

      {/* voice card, lighthouse */}
      <g transform={`translate(420 736) scale(${T})`}>
        <Dots d={[[622, 108, 13], [825, 125, 10], [1163, 88, 11], [1173, 36, 11]]} />
        <Marks m={[["spark", 1037, 84, 38, 10]]} />
        <Lines
          p={[
            "M642 24Q650 90 665 115L960 60Q975 45 965 24M685 35Q690 20 705 30L708 60Q700 75 690 65ZM680 62Q690 80 718 65M702 78L708 95M745 28L778 38L750 65ZM900 45L915 58L935 28M1145 24L1115 132M1210 24L1200 132M1138 50L1205 60M1125 105L1200 115M875 132Q930 90 1010 132M470 24Q490 80 540 80Q580 70 600 30Q620 40 560 105Q520 130 470 125M800 35L865 24",
          ]}
        />
      </g>
    </>
  );
}

function Wallpaper() {
  return (
    <svg
      className="absolute inset-0 h-full w-full fill-none stroke-[#161f25] [&_*]:[vector-effect:non-scaling-stroke]"
      viewBox="0 0 1396 1156"
      strokeWidth={2}
      strokeLinecap="round"
      strokeLinejoin="round"
      aria-hidden="true"
    >
      <Doodles />
      <g transform="translate(824 0)">
        <Doodles />
      </g>
    </svg>
  );
}

/* ---------- header ---------- */

function Avatar() {
  return (
    <svg className="h-20 w-20 shrink-0" viewBox="0 0 240 240" aria-hidden="true">
      <defs>
        <filter id="smudge" x="-200%" y="-50%" width="500%" height="200%">
          <feGaussianBlur stdDeviation="2.5 10" />
        </filter>
      </defs>
      <circle cx="120" cy="120" r="120" fill="#ffa305" />
      <g filter="url(#smudge)" fill="#8a5200">
        <rect x="29" y="66" width="5" height="66" />
        <rect x="205" y="66" width="5" height="66" />
      </g>
      <path d="M52 206H78M92 208H150M178 206H202" stroke="#d98704" strokeWidth="2" opacity=".6" />
      <g fill="#0a0603">
        {/* centre figure */}
        <path d="M119 70Q127 70 127 79L129 85Q140 88 143 98L141 112L134 124L132 136L136 152L131 162L133 172L136 176H124L125 162L121 140L118 140L114 162L115 176H102L106 172L107 162L103 152L107 136L105 124L98 112L96 98Q99 88 110 85L112 79Q112 70 119 70Z" />
        {/* left figure */}
        <path d="M82 74Q90 75 88 87L96 95L104 104L100 128L106 146L113 166L112 176H103L100 166L92 144L84 156L78 172L82 176H66L70 172L69 158L74 140L70 126L68 134L62 136Q57 122 57 104Q57 84 62 76Q68 78 72 86Q72 74 82 74Z" />
        {/* right figure */}
        <path d="M157 74Q149 75 151 87L143 95L135 104L139 128L133 146L126 166L127 176H136L139 166L147 144L155 156L161 172L157 176H174L170 172L171 158L166 140L170 126L172 134L177 136Q183 122 183 104Q183 84 177 76Q171 78 167 86Q168 74 157 74Z" />
      </g>
      <path d="M100 132L88 150M139 132L151 150" stroke="#ffa305" strokeWidth="2" />
      <circle cx="120" cy="101" r="9" fill="#dfe3e6" />
      <path d="M120 94L127 101L120 108L113 101ZM111 101H129M120 92V110" fill="none" stroke="#16181a" strokeWidth="2.5" />
      <ellipse cx="65" cy="101" rx="3.5" ry="7" fill="#9db58f" transform="rotate(-20 65 101)" />
      <ellipse cx="175" cy="101" rx="3.5" ry="7" fill="#9db58f" transform="rotate(20 175 101)" />
    </svg>
  );
}

function Header() {
  return (
    <header className="relative z-10 shrink-0 shadow-[0_2px_4px_rgba(0,0,0,0.35)]">
      <div className="h-0.5 bg-[#1b1b1b]" />
      <div className="h-0.5 bg-black" />
      <div className="h-px bg-[#77797b]" />
      <div className="h-px bg-black" />
      <div className="h-0.5 bg-[#656b70]" />
      <div className="flex h-[116px] items-start gap-[30px] bg-[#202c33] pl-[30px] pt-4">
        <Avatar />
        <div className="min-w-0 flex-1 overflow-hidden whitespace-nowrap">
          <h1 className="h-[42px] text-[32px] font-[540] leading-[42px] tracking-[-0.77px] text-[#e9edef]">Cypher Defense</h1>
          <p className="h-[42px] text-[26px] leading-[42px] tracking-[-0.255px] text-[#8696a0]">
            Aga, Anita, Emmanuel, Francois, Jacki, Jakob/Jascha, Johnson, Jonathan, Marta, Nelson, Ozioma, Sarah
          </p>
        </div>
      </div>
    </header>
  );
}

/* ---------- messages ---------- */

interface BubbleProps {
  size: string;
  time: string;
  author?: string;
  authorColor?: string;
  lines: { text: string; tracking: string }[];
  children?: React.ReactNode;
}

function Bubble({ size, time, author, authorColor, lines, children }: BubbleProps) {
  return (
    <article className={`relative ml-[178px] bg-[#202c33] pl-[18px] ${author ? "rounded-[14px] rounded-tl-none pt-[13px]" : "rounded-[14px] pt-3"} ${size}`}>
      {author && (
        <>
          <svg className="absolute -left-[15px] top-0 h-6 w-[15px] fill-[#202c33]" viewBox="0 0 15 24" aria-hidden="true">
            <path d="M15 0H3Q-1 0 1.500 3.500L15 23Z" />
          </svg>
          <h2 className={`h-[49px] text-[29.500px] font-[540] leading-[49px] tracking-[-0.18px] ${authorColor}`}>{author}</h2>
        </>
      )}
      <div className="text-[32.500px] leading-[50px] text-[#e9edef]">
        {lines.map((l) => (
          <p key={l.text} className={`whitespace-nowrap font-[430] ${l.tracking}`}>
            {l.text}
          </p>
        ))}
      </div>
      <time className="absolute -bottom-px right-[14px] text-[27px] leading-9 tracking-[0.2px] text-[#a0a6a9]">{time}</time>
      {children}
    </article>
  );
}

function Reaction() {
  return (
    <div className="absolute left-4 top-[120px] flex h-[52px] w-16 items-center justify-center rounded-full border-2 border-[#10191f] bg-[#202c33]">
      <svg className="h-[30px] w-[30px]" viewBox="0 0 30 30" aria-label="Red heart" role="img">
        <defs>
          <linearGradient id="heartFill" x1="0" y1="0" x2="0" y2="1">
            <stop offset="0" stopColor="#ff8f80" />
            <stop offset=".28" stopColor="#ff4a3a" />
            <stop offset=".65" stopColor="#fb3223" />
            <stop offset="1" stopColor="#d9200f" />
          </linearGradient>
        </defs>
        <path d="M15 29.500C13 26 .3 19 .3 8.500C.3 3.500 4 .6 7.800 .6C11 .6 13.600 2.200 15 5.200C16.400 2.200 19 .6 22.200 .6C26 .6 29.700 3.500 29.700 8.500C29.700 19 17 26 15 29.500Z" fill="url(#heartFill)" />
      </svg>
    </div>
  );
}

export default function App() {
  return (
    <div className="flex h-[1156px] w-[1396px] flex-col overflow-hidden bg-[#0b141a] font-['Inter','Liberation_Sans',sans-serif]">
      <Header />
      <main className="relative min-h-0 flex-1 overflow-hidden">
        <div className="absolute left-0 top-[-124px] h-[1156px] w-[1396px]">
          <Wallpaper />
        </div>
        <div className="relative flex flex-col">
          <div className="ml-[752px] h-[68px] rounded-bl-[14px] bg-[#025d4b]" />
          <Bubble
            size="mt-9 h-[428px] w-[1068px]"
            author="Anita Lamprecht"
            authorColor="text-[#7f66ff]"
            time="4:14 AM"
            lines={[
              { text: "Hello Gary, I got a feedback from the insurance. they are asking if we", tracking: "tracking-[-0.48px]" },
              { text: "could already provide a presentation of our product. They are", tracking: "tracking-[-0.445px]" },
              { text: "generally interested in cooperating with start-ups in order to develop", tracking: "tracking-[-0.375px]" },
              { text: "customer oriented products «ideally in a cash-flow free testphase».", tracking: "tracking-[-0.34px]" },
              { text: "as mentioned a few days ago, the insurance is currently struggling to", tracking: "tracking-[-0.44px]" },
              { text: "sell even the basic cyber security offer they have due to a lack of", tracking: "tracking-[-0.465px]" },
              { text: "awareness among Swiss people.", tracking: "tracking-[-0.66px]" },
            ]}
          />
          <Bubble
            size="mt-2.5 h-[78px] w-[708px]"
            time="4:15 AM"
            lines={[{ text: "... so not sure if it makes sense for us.", tracking: "tracking-[-0.43px]" }]}
          />
          <Bubble
            size="mt-9 h-32 w-[990px]"
            author="Francois renet"
            authorColor="text-[#06cf9c]"
            time="4:28 AM"
            lines={[{ text: "I think Credit Suisse and UBS might be great candidates!", tracking: "tracking-[-0.375px]" }]}
          >
            <Reaction />
          </Bubble>
          <Bubble
            size="mt-[88px] h-32 w-[264px]"
            author="Anita Lamprecht"
            authorColor="text-[#7f66ff]"
            time="4:29 AM"
            lines={[{ text: "yes.", tracking: "tracking-[-0.6px]" }]}
          />
        </div>
      </main>
    </div>
  );
}
